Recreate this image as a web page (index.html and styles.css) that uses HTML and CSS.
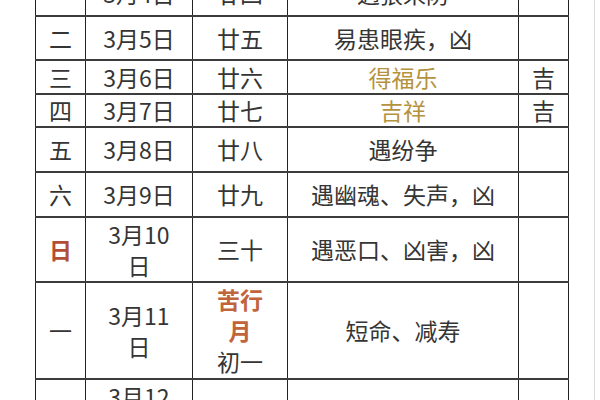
FILE: index.html
```html
<!DOCTYPE html>
<html lang="zh">
<head>
<meta charset="utf-8">
<title>三月日历</title>
<link rel="stylesheet" href="styles.css">
</head>
<body>
<div class="page">
  <table class="cal">
    <colgroup>
      <col class="c-week"><col class="c-date"><col class="c-lunar"><col class="c-note"><col class="c-luck">
    </colgroup>
    <tbody>
      <tr class="r-top"><td>一</td><td>3月4日</td><td>廿四</td><td>遇狼来防</td><td></td></tr>
      <tr class="r-44"><td>二</td><td>3月5日</td><td>廿五</td><td>易患眼疾，凶</td><td></td></tr>
      <tr class="r-34"><td>三</td><td>3月6日</td><td>廿六</td><td class="gold">得福乐</td><td>吉</td></tr>
      <tr class="r-33"><td>四</td><td>3月7日</td><td>廿七</td><td class="gold">吉祥</td><td>吉</td></tr>
      <tr class="r-45"><td>五</td><td>3月8日</td><td>廿八</td><td>遇纷争</td><td></td></tr>
      <tr class="r-45"><td>六</td><td>3月9日</td><td>廿九</td><td>遇幽魂、失声，凶</td><td></td></tr>
      <tr class="r-65"><td class="sun">日</td><td>3月10<br>日</td><td>三十</td><td>遇恶口、凶害，凶</td><td></td></tr>
      <tr class="r-97"><td>一</td><td>3月11<br>日</td><td><span class="fest">苦行<br>月</span><br>初一</td><td>短命、减寿</td><td></td></tr>
      <tr class="r-65"><td>二</td><td>3月12<br>日</td><td>初二</td><td>遇恶人、遭灾祸</td><td></td></tr>
    </tbody>
  </table>
</div>
</body>
</html>
```
FILE: styles.css
```css
html, body {
  margin: 0;
  padding: 0;
  background: #ffffff;
}

.page {
  width: 559px;
  height: 400px;
  padding-left: 35px;
  border-right: 1px solid #dcdcdc;
  overflow: hidden;
  box-sizing: content-box;
}

.cal {
  border-collapse: collapse;
  table-layout: fixed;
  width: 533px;
  margin-top: -30px;
  font-family: "Noto Sans CJK SC", "Noto Sans", sans-serif;
  font-size: 23px;
  line-height: 31px;
  color: #353535;
}

.c-week { width: 50px; }
.c-date { width: 107px; }
.c-lunar { width: 95px; }
.c-note { width: 231px; }
.c-luck { width: 50px; }

.cal td {
  border-left: 1px solid #222222;
  border-right: 1px solid #222222;
  border-top: 2px solid #3c3c3c;
  border-bottom: 2px solid #3c3c3c;
  padding: 0 2px;
  text-align: center;
  vertical-align: middle;
}

.r-top { height: 45px; }
.r-44 { height: 44px; }
.r-34 { height: 34px; }
.r-33 { height: 33px; }
.r-45 { height: 45px; }
.r-65 { height: 65px; }
.r-97 { height: 97px; }

.gold { color: #b4923e; }
.sun { color: #b24e33; font-weight: 700; }
.fest { color: #c0643c; font-weight: 700; }
```
